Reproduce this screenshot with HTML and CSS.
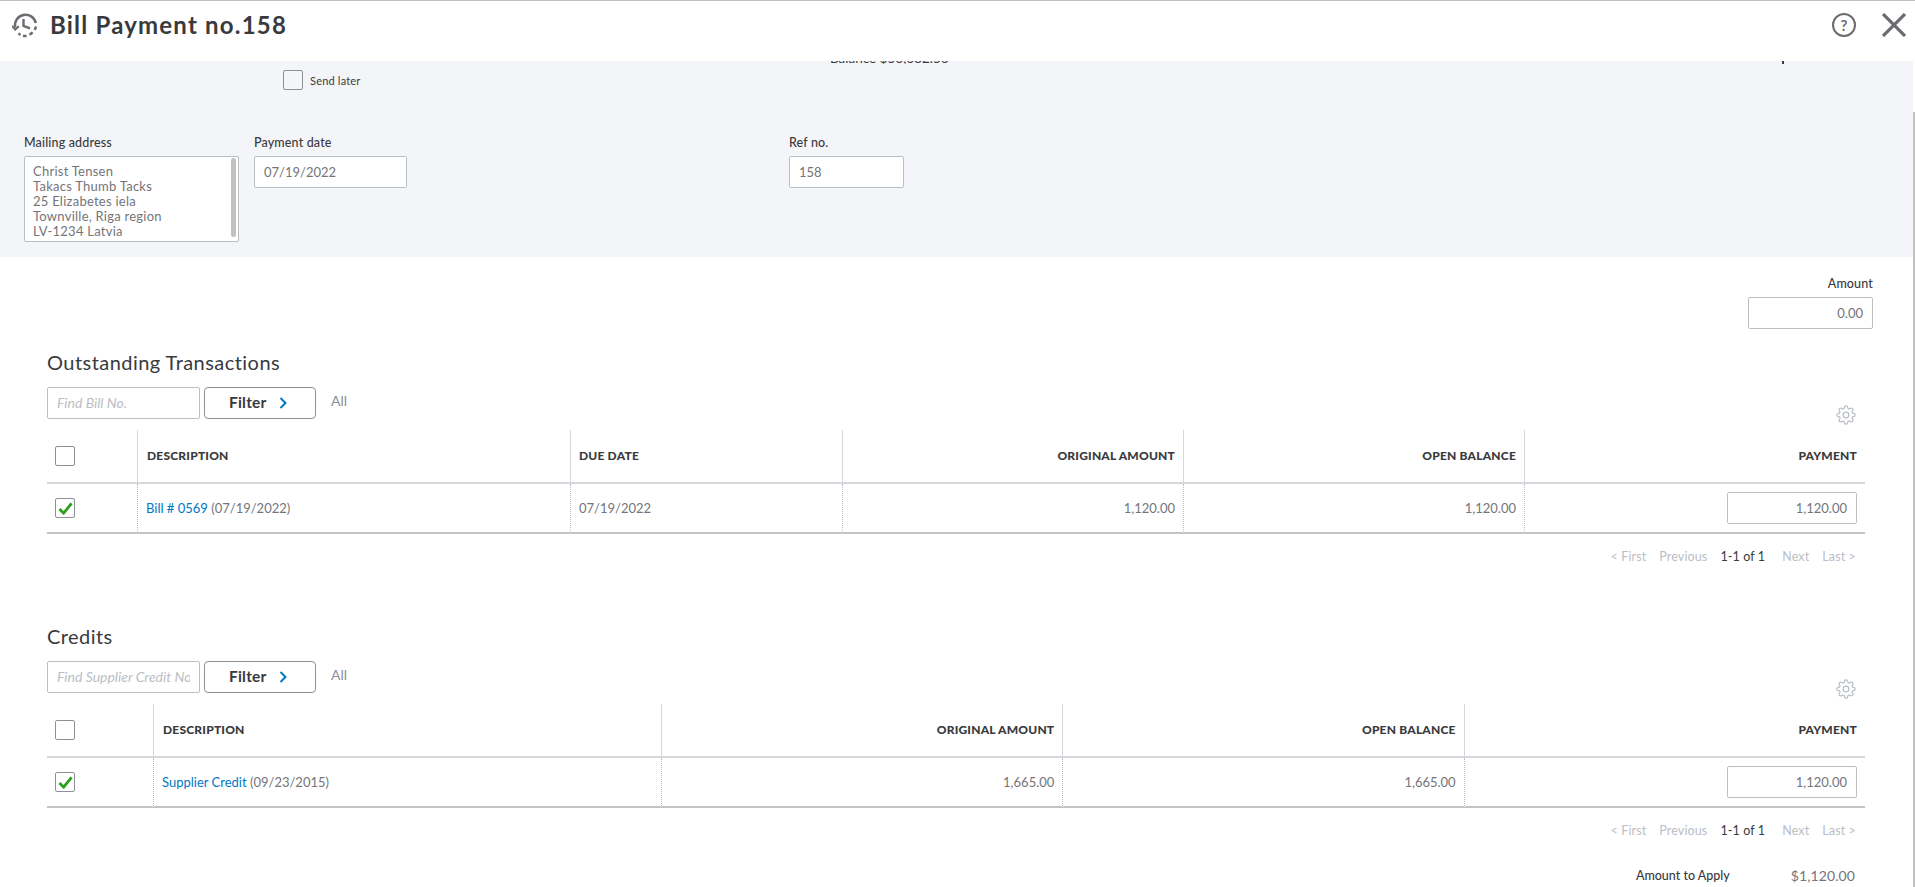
FILE: index.html
```html
<!DOCTYPE html>
<html lang="en">
<head>
<meta charset="utf-8">
<title>Bill Payment no.158</title>
<link rel="stylesheet" href="styles.css">
</head>
<body>
<header class="topbar">
  <svg class="history-icon" viewBox="0 0 26 26" fill="none" stroke="#6b6c72" stroke-width="2.5">
    <path d="M3.2 15.5A10.5 10.5 0 1 1 23.8 11"/>
    <path d="M24 14.5a10.5 10.5 0 0 1-1.4 3.4M20.6 20.4a10.5 10.5 0 0 1-3.2 2.2M14.6 23.9a10.5 10.5 0 0 1-3.6-.2M8.6 22.8a10.5 10.5 0 0 1-2.2-1.4" />
    <path d="M11.5 7v7l6.5 2.4" stroke-width="2.4"/>
    <path d="M0 14l3.2 3.6 3.6-3.4" stroke-width="2"/>
  </svg>
  <h1 class="title">Bill Payment no.158</h1>
  <div class="top-actions">
    <span class="help">?</span>
    <svg class="close" viewBox="0 0 24 24" fill="none" stroke="#6b6c72" stroke-width="3.2"><path d="M1 1l22 22M23 1L1 23"/></svg>
  </div>
</header>

<div class="frame">
  <main class="content">
    <section class="panel">
      <div class="panel-top">
        <label class="send-later"><span class="check"></span><span>Send later</span></label>
        <div class="balance-clip"><span>Balance $56,682.56</span></div>
        <span class="tick"></span>
      </div>
      <div class="fields">
        <div class="field field-address">
          <div class="field-label">Mailing address</div>
          <div class="address">
            <div class="address-text">Christ Tensen<br>Takacs Thumb Tacks<br>25 Elizabetes iela<br>Townville, Riga region<br>LV-1234 Latvia</div>
            <span class="address-scroll"></span>
          </div>
        </div>
        <div class="field field-date">
          <div class="field-label">Payment date</div>
          <input class="text-input" value="07/19/2022" readonly>
        </div>
        <div class="field field-ref">
          <div class="field-label">Ref no.</div>
          <input class="text-input" value="158" readonly>
        </div>
      </div>
    </section>

    <div class="amount-block">
      <div class="field-label">Amount</div>
      <input class="text-input right amount-input" value="0.00" readonly>
    </div>

    <section class="list list-first">
      <h2 class="list-title">Outstanding Transactions</h2>
      <div class="tools">
        <input class="text-input find" placeholder="Find Bill No.">
        <button class="filter" type="button"><span class="filter-text">Filter</span><svg class="chevron" viewBox="0 0 8 12" fill="none" stroke="#0077c5" stroke-width="2"><path d="M1.5 1l5 5-5 5"/></svg></button>
        <span class="all">All</span>
        <svg class="gear" viewBox="0 0 24 24" fill="none" stroke="#babec5" stroke-width="1.5"><circle cx="12" cy="12" r="3.4"/><path d="M19.4 15a1.65 1.65 0 0 0 .33 1.82l.06.06a2 2 0 0 1 0 2.83 2 2 0 0 1-2.83 0l-.06-.06a1.65 1.65 0 0 0-1.82-.33 1.65 1.65 0 0 0-1 1.51V21a2 2 0 0 1-2 2 2 2 0 0 1-2-2v-.09A1.65 1.65 0 0 0 9 19.4a1.65 1.65 0 0 0-1.82.33l-.06.06a2 2 0 0 1-2.83 0 2 2 0 0 1 0-2.83l.06-.06a1.65 1.65 0 0 0 .33-1.82 1.65 1.65 0 0 0-1.51-1H3a2 2 0 0 1-2-2 2 2 0 0 1 2-2h.09A1.65 1.65 0 0 0 4.6 9a1.65 1.65 0 0 0-.33-1.82l-.06-.06a2 2 0 0 1 0-2.83 2 2 0 0 1 2.83 0l.06.06a1.65 1.65 0 0 0 1.82.33H9a1.65 1.65 0 0 0 1-1.51V3a2 2 0 0 1 2-2 2 2 0 0 1 2 2v.09a1.65 1.65 0 0 0 1 1.51 1.65 1.65 0 0 0 1.82-.33l.06-.06a2 2 0 0 1 2.83 0 2 2 0 0 1 0 2.83l-.06.06a1.65 1.65 0 0 0-.33 1.82V9a1.65 1.65 0 0 0 1.51 1H21a2 2 0 0 1 2 2 2 2 0 0 1-2 2h-.09a1.65 1.65 0 0 0-1.51 1z"/></svg>
      </div>
      <table class="grid grid-bills">
        <colgroup><col class="c-check"><col class="c-desc"><col class="c-due"><col class="c-num"><col class="c-num"><col class="c-num"></colgroup>
        <thead>
          <tr>
            <th><span class="check"></span></th>
            <th>DESCRIPTION</th>
            <th>DUE DATE</th>
            <th class="r">ORIGINAL AMOUNT</th>
            <th class="r">OPEN BALANCE</th>
            <th class="r">PAYMENT</th>
          </tr>
        </thead>
        <tbody>
          <tr>
            <td><span class="check"><svg viewBox="0 0 16 14" fill="none" stroke="#2ca01c" stroke-width="3"><path d="M1.5 7.5l4.5 4.5 8.5-10.5"/></svg></span></td>
            <td><a class="link">Bill # 0569</a> (07/19/2022)</td>
            <td>07/19/2022</td>
            <td class="r">1,120.00</td>
            <td class="r">1,120.00</td>
            <td class="r"><input class="text-input right pay-input" value="1,120.00" readonly></td>
          </tr>
        </tbody>
      </table>
      <nav class="pager">
        <span>&lt; First</span><span>Previous</span><span class="count">1-1 of 1</span><span>Next</span><span>Last &gt;</span>
      </nav>
    </section>

    <section class="list list-second">
      <h2 class="list-title">Credits</h2>
      <div class="tools">
        <input class="text-input find" placeholder="Find Supplier Credit No">
        <button class="filter" type="button"><span class="filter-text">Filter</span><svg class="chevron" viewBox="0 0 8 12" fill="none" stroke="#0077c5" stroke-width="2"><path d="M1.5 1l5 5-5 5"/></svg></button>
        <span class="all">All</span>
        <svg class="gear" viewBox="0 0 24 24" fill="none" stroke="#babec5" stroke-width="1.5"><circle cx="12" cy="12" r="3.4"/><path d="M19.4 15a1.65 1.65 0 0 0 .33 1.82l.06.06a2 2 0 0 1 0 2.83 2 2 0 0 1-2.83 0l-.06-.06a1.65 1.65 0 0 0-1.82-.33 1.65 1.65 0 0 0-1 1.51V21a2 2 0 0 1-2 2 2 2 0 0 1-2-2v-.09A1.65 1.65 0 0 0 9 19.4a1.65 1.65 0 0 0-1.82.33l-.06.06a2 2 0 0 1-2.83 0 2 2 0 0 1 0-2.83l.06-.06a1.65 1.65 0 0 0 .33-1.82 1.65 1.65 0 0 0-1.51-1H3a2 2 0 0 1-2-2 2 2 0 0 1 2-2h.09A1.65 1.65 0 0 0 4.6 9a1.65 1.65 0 0 0-.33-1.82l-.06-.06a2 2 0 0 1 0-2.83 2 2 0 0 1 2.83 0l.06.06a1.65 1.65 0 0 0 1.82.33H9a1.65 1.65 0 0 0 1-1.51V3a2 2 0 0 1 2-2 2 2 0 0 1 2 2v.09a1.65 1.65 0 0 0 1 1.51 1.65 1.65 0 0 0 1.82-.33l.06-.06a2 2 0 0 1 2.83 0 2 2 0 0 1 0 2.83l-.06.06a1.65 1.65 0 0 0-.33 1.82V9a1.65 1.65 0 0 0 1.51 1H21a2 2 0 0 1 2 2 2 2 0 0 1-2 2h-.09a1.65 1.65 0 0 0-1.51 1z"/></svg>
      </div>
      <table class="grid grid-credits">
        <colgroup><col class="c-check"><col class="c-desc"><col class="c-num"><col class="c-num"><col class="c-num"></colgroup>
        <thead>
          <tr>
            <th><span class="check"></span></th>
            <th>DESCRIPTION</th>
            <th class="r">ORIGINAL AMOUNT</th>
            <th class="r">OPEN BALANCE</th>
            <th class="r">PAYMENT</th>
          </tr>
        </thead>
        <tbody>
          <tr>
            <td><span class="check"><svg viewBox="0 0 16 14" fill="none" stroke="#2ca01c" stroke-width="3"><path d="M1.5 7.5l4.5 4.5 8.5-10.5"/></svg></span></td>
            <td><a class="link">Supplier Credit</a> (09/23/2015)</td>
            <td class="r">1,665.00</td>
            <td class="r">1,665.00</td>
            <td class="r"><input class="text-input right pay-input" value="1,120.00" readonly></td>
          </tr>
        </tbody>
      </table>
      <nav class="pager">
        <span>&lt; First</span><span>Previous</span><span class="count">1-1 of 1</span><span>Next</span><span>Last &gt;</span>
      </nav>
      <div class="apply">
        <span class="apply-label">Amount to Apply</span>
        <span class="apply-value">$1,120.00</span>
      </div>
    </section>
  </main>
  <div class="scroll-track"><span class="scroll-thumb"></span></div>
</div>
</body>
</html>
```

FILE: styles.css
```css
* { box-sizing: border-box; }

html, body {
  height: 100%;
  margin: 0;
  overflow: hidden;
}

body {
  background: #fff;
  color: #393a3d;
  font-family: "Lato", "Open Sans", sans-serif;
  font-size: 12px;
}

.topbar {
  display: flex;
  align-items: center;
  height: 61px;
  padding: 0 9px 12px 12px;
  border-top: 1px solid #c0c0c0;
}

.history-icon {
  width: 26px;
  height: 26px;
  flex: none;
}

.title {
  margin: 0 0 0 12px;
  font-size: 24px;
  font-weight: 700;
  letter-spacing: 1.2px;
  line-height: 28px;
}

.top-actions {
  display: flex;
  align-items: center;
  gap: 26px;
  margin-left: auto;
}

.help {
  display: flex;
  align-items: center;
  justify-content: center;
  width: 24px;
  height: 24px;
  border: 2px solid #6b6c72;
  border-radius: 50%;
  color: #6b6c72;
  font-size: 15px;
  font-weight: 700;
}

.close { width: 24px; height: 24px; }

.frame {
  display: flex;
  height: 826px;
}

.content {
  flex: 1;
  min-width: 0;
}

.scroll-track {
  width: 2px;
  padding-top: 51px;
}

.scroll-thumb {
  display: block;
  height: 100%;
  background: #c1c1c1;
}

.panel {
  height: 196px;
  padding-left: 24px;
  background: #f4f5f8;
}

.panel-top {
  display: flex;
  height: 74px;
  align-items: flex-start;
}

.send-later {
  display: flex;
  align-items: center;
  gap: 7px;
  width: 547px;
  margin: 9px 0 0 259px;
  font-size: 11px;
  letter-spacing: 0.2px;
}

.check {
  display: flex;
  align-items: center;
  justify-content: center;
  width: 20px;
  height: 20px;
  border: 1px solid #8d9096;
  border-radius: 2px;
  background: #fff;
}

.check svg { width: 15px; height: 13px; }

.send-later .check { background: transparent; }

.balance-clip {
  display: flex;
  flex-direction: column;
  justify-content: flex-end;
  width: 120px;
  height: 3px;
  overflow: hidden;
  font-size: 13.5px;
  line-height: 12px;
  white-space: nowrap;
}

.tick {
  width: 2px;
  height: 3px;
  margin-left: 832px;
  background: #393a3d;
}

.fields { display: flex; }

.field-label {
  height: 16px;
  margin-bottom: 5px;
  font-size: 12.5px;
  font-weight: 500;
  line-height: 16px;
  letter-spacing: 0.15px;
}

.field-address { width: 215px; margin-right: 15px; }
.field-date { width: 153px; margin-right: 382px; }
.field-ref { width: 115px; }

.address {
  display: flex;
  justify-content: space-between;
  height: 86px;
  padding: 1px 2px 0 8px;
  border: 1px solid #babec5;
  border-radius: 2px;
  background: #fff;
  color: #74757a;
}

.address-text {
  padding-top: 6px;
  font-size: 13px;
  line-height: 15px;
  letter-spacing: 0.25px;
  white-space: nowrap;
}

.address-scroll {
  width: 5px;
  height: 79px;
  border-radius: 3px;
  background: #c1c1c1;
}

.text-input {
  display: block;
  width: 100%;
  height: 32px;
  padding: 0 9px;
  border: 1px solid #babec5;
  border-radius: 2px;
  outline: none;
  background: #fff;
  color: #74757a;
  font-family: inherit;
  font-size: 13px;
  letter-spacing: 0;
}

.text-input.right { text-align: right; }

.amount-block {
  display: flex;
  flex-direction: column;
  align-items: flex-end;
  padding: 19px 40px 0 0;
}

.amount-input { width: 125px; }

.list { padding: 0 48px 0 47px; }
.list-first { margin-top: 21px; }
.list-second { margin-top: 59px; }

.list-title {
  margin: 0 0 13px;
  font-size: 20px;
  font-weight: 400;
  line-height: 24px;
  letter-spacing: 0.45px;
}

.tools {
  display: flex;
  align-items: flex-start;
  height: 43px;
}

.find {
  width: 153px;
  flex: none;
}

.find::placeholder {
  color: #babec5;
  font-size: 14px;
  font-style: italic;
  opacity: 1;
}

.filter {
  display: flex;
  align-items: center;
  justify-content: flex-start;
  gap: 12px;
  width: 112px;
  height: 32px;
  margin-left: 4px;
  padding: 0 0 0 24px;
  border: 1px solid #8d9096;
  border-radius: 4px;
  background: #fff;
  color: #393a3d;
  font-family: inherit;
  font-size: 15.5px;
  font-weight: 700;
  letter-spacing: 0.2px;
}

.filter-text { margin-top: -2px; }

.chevron { width: 8px; height: 12px; }

.all {
  margin: 4px 0 0 15px;
  color: #8d9096;
  font-size: 14px;
  line-height: 20px;
}

.gear {
  width: 20px;
  height: 20px;
  margin: 18px 9px 0 auto;
}

.grid {
  width: 100%;
  table-layout: fixed;
  border-collapse: separate;
  border-spacing: 0;
}

.c-check { width: 90px; }
.grid-bills .c-desc { width: 433px; }
.grid-bills .c-due { width: 272px; }
.grid-credits .c-check { width: 106px; }
.grid-credits .c-desc { width: 508px; }

.grid th {
  height: 54px;
  padding: 0 8px 2px 8px;
  border-bottom: 2px solid #d4d7dc;
  border-left: 1px solid #d4d7dc;
  font-size: 12px;
  font-weight: 900;
  text-align: left;
  letter-spacing: 0.2px;
}

.grid th:nth-child(2) { padding-left: 9px; }

.grid td {
  height: 50px;
  padding: 0 8px;
  border-bottom: 2px solid #c4c4c4;
  border-left: 1px dotted #babec5;
  color: #74757a;
  font-size: 13px;
}

.grid th:first-child,
.grid td:first-child {
  border-left: 0;
}

.grid th:first-child { padding-bottom: 0; }

.grid .r { text-align: right; }

.link { color: #0077c5; }

.pay-input {
  width: 130px;
  margin-left: auto;
}

.pager {
  display: flex;
  justify-content: flex-end;
  gap: 13px;
  height: 16px;
  margin-top: 15px;
  padding-right: 9px;
  color: #babec5;
  font-size: 12.5px;
  line-height: 16px;
  letter-spacing: 0.12px;
}

.count {
  margin-right: 4px;
  color: #393a3d;
}

.apply {
  display: flex;
  justify-content: flex-end;
  align-items: center;
  gap: 61px;
  height: 16px;
  margin-top: 28px;
  padding-right: 10px;
}

.apply-label { font-size: 12.5px; font-weight: 500; }

.apply-value {
  color: #74757a;
  font-size: 14px;
  letter-spacing: 0.1px;
}
```
